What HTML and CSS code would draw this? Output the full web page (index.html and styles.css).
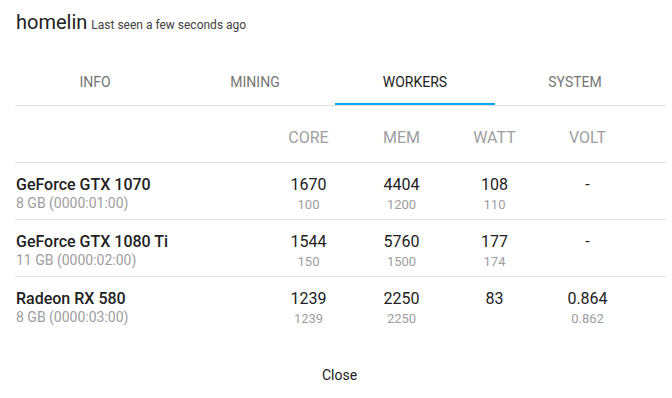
FILE: index.html
```html
<!DOCTYPE html>
<html>
<head>
<meta charset="utf-8">
<link rel="stylesheet" href="styles.css">
</head>
<body>
<div class="dialog">
  <div class="title">
    <span class="name">homelin</span>
    <span class="seen">Last seen a few seconds ago</span>
  </div>
  <div class="tabs">
    <div class="tab">INFO</div>
    <div class="tab">MINING</div>
    <div class="tab active">WORKERS</div>
    <div class="tab">SYSTEM</div>
  </div>
  <div class="table">
    <div class="row head">
      <div class="cell name-cell"></div>
      <div class="cell">CORE</div>
      <div class="cell">MEM</div>
      <div class="cell">WATT</div>
      <div class="cell">VOLT</div>
    </div>
    <div class="row">
      <div class="cell name-cell"><div class="gpu">GeForce GTX 1070</div><div class="sub">8 GB (0000:01:00)</div></div>
      <div class="cell"><div class="val">1670</div><div class="subval">100</div></div>
      <div class="cell"><div class="val">4404</div><div class="subval">1200</div></div>
      <div class="cell"><div class="val">108</div><div class="subval">110</div></div>
      <div class="cell"><div class="val">-</div></div>
    </div>
    <div class="row">
      <div class="cell name-cell"><div class="gpu">GeForce GTX 1080 Ti</div><div class="sub">11 GB (0000:02:00)</div></div>
      <div class="cell"><div class="val">1544</div><div class="subval">150</div></div>
      <div class="cell"><div class="val">5760</div><div class="subval">1500</div></div>
      <div class="cell"><div class="val">177</div><div class="subval">174</div></div>
      <div class="cell"><div class="val">-</div></div>
    </div>
    <div class="row last">
      <div class="cell name-cell"><div class="gpu">Radeon RX 580</div><div class="sub">8 GB (0000:03:00)</div></div>
      <div class="cell"><div class="val">1239</div><div class="subval">1239</div></div>
      <div class="cell"><div class="val">2250</div><div class="subval">2250</div></div>
      <div class="cell"><div class="val">83</div></div>
      <div class="cell"><div class="val">0.864</div><div class="subval">0.862</div></div>
    </div>
  </div>
  <div class="actions">
    <button class="close">Close</button>
  </div>
</div>
</body>
</html>
```
FILE: styles.css
```css
html, body {
  margin: 0;
  padding: 0;
  background: #fff;
}
body {
  font-family: Roboto, "Liberation Sans", sans-serif;
  color: #212121;
}
.dialog {
  width: 651px;
  margin-left: 15px;
}
.title {
  padding-top: 10px;
  height: 57px;
  box-sizing: border-box;
  white-space: nowrap;
}
.title .name {
  font-size: 20px;
  line-height: 24px;
  color: #212121;
  margin-left: 1px;
}
.title .seen {
  font-size: 12px;
  color: #424242;
}
.tabs {
  display: flex;
  height: 49px;
  border-bottom: 1px solid #e0e0e0;
  box-sizing: border-box;
}
.tab {
  width: 160px;
  height: 48px;
  box-sizing: border-box;
  display: flex;
  align-items: center;
  justify-content: center;
  font-size: 14px;
  color: #757575;
  padding-top: 1px;
}
.tab.active {
  color: #212121;
  border-bottom: 2px solid #03a9f4;
  padding-top: 3px;
}
.row {
  display: grid;
  grid-template-columns: 247px 93px 93px 93px 93px 32px;
  height: 57px;
  box-sizing: border-box;
  border-bottom: 1px solid #e0e0e0;
}
.row.last {
  border-bottom: none;
}
.cell {
  text-align: center;
  padding-top: 12px;
}
.head .cell {
  font-size: 16px;
  color: #9e9e9e;
  padding-top: 22px;
  line-height: 20px;
}
.name-cell {
  text-align: left;
  padding-left: 1px;
  padding-top: 12px;
}
.gpu {
  font-size: 16px;
  font-weight: 500;
  line-height: 20px;
  color: #212121;
}
.sub {
  font-size: 14px;
  line-height: 16px;
  color: #9e9e9e;
}
.val {
  font-size: 16px;
  line-height: 20px;
  color: #212121;
}
.subval {
  font-size: 13px;
  line-height: 14px;
  color: #9e9e9e;
  margin-top: 3px;
}
.actions {
  display: flex;
  justify-content: center;
  padding-top: 23px;
  padding-right: 2px;
}
.close {
  font-family: Roboto, "Liberation Sans", sans-serif;
  font-size: 14px;
  font-weight: 400;
  color: #212121;
  background: none;
  border: none;
  height: 36px;
  padding: 0 16px;
}
```
